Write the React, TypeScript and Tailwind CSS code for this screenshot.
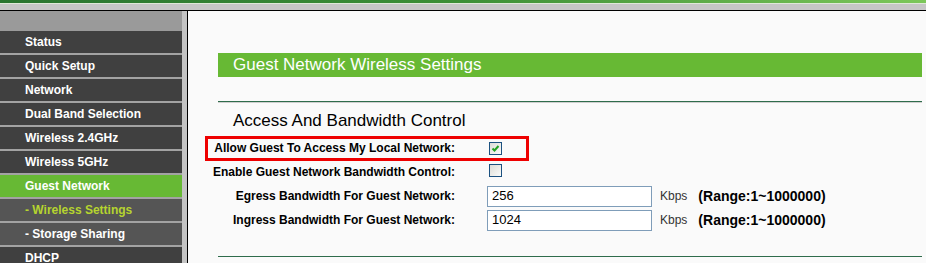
import React from "react";

const items: { label: string; kind: "main" | "active" | "sub" | "subactive" }[] = [
  { label: "Status", kind: "main" },
  { label: "Quick Setup", kind: "main" },
  { label: "Network", kind: "main" },
  { label: "Dual Band Selection", kind: "main" },
  { label: "Wireless 2.4GHz", kind: "main" },
  { label: "Wireless 5GHz", kind: "main" },
  { label: "Guest Network", kind: "active" },
  { label: "- Wireless Settings", kind: "subactive" },
  { label: "- Storage Sharing", kind: "sub" },
  { label: "DHCP", kind: "main" },
];

function Checkbox({ checked }: { checked: boolean }) {
  return (
    <span className="inline-flex h-[13px] w-[13px] items-center justify-center border border-[#1c5180] bg-gradient-to-br from-[#dcdcd7] to-[#fbfbf9]">
      {checked && (
        <svg width="9" height="9" viewBox="0 0 9 9">
          <path d="M1.5 4.5 L3.5 6.5 L7.5 2" stroke="#21a121" strokeWidth="2" fill="none" />
        </svg>
      )}
    </span>
  );
}

function Row({ label, children }: { label: string; children: React.ReactNode }) {
  return (
    <div className="flex h-[24px] items-center">
      <div className="w-[267px] text-right text-[12px] font-bold text-black">{label}</div>
      <div className="ml-[32px] flex items-center">{children}</div>
    </div>
  );
}

function BwInput({ value }: { value: string }) {
  return (
    <div className="flex items-center">
      <div className="flex h-[21px] w-[165px] items-center border border-[#7f9db9] bg-white pl-[4px] text-[13px] text-black">
        {value}
      </div>
      <span className="ml-[8px] text-[12px] text-[#333]">Kbps</span>
      <span className="ml-[11px] text-[14px] font-bold text-black">(Range:1~1000000)</span>
    </div>
  );
}

export default function App() {
  return (
    <div className="h-[263px] w-[926px] overflow-hidden bg-[#fafafa] font-['Liberation_Sans',Arial,sans-serif]">
      <div className="h-[3px] bg-gradient-to-r from-[#2a7530] via-[#3c8f36] to-[#7cc75a]" />
      <div className="h-px bg-[#dfe8d8]" />
      <div className="h-[6px] bg-[#c6c6c6]" />
      <div className="h-px bg-black" />
      <div className="flex">
        <div className="w-[182px] shrink-0">
          <div className="h-[20px] bg-[#9a9a9a]" />
          {items.map((it) => (
            <div key={it.label}>
              <div
                className={
                  "flex h-[22px] items-center pl-[25px] text-[12px] font-bold " +
                  (it.kind === "active"
                    ? "bg-[#67b934] text-white"
                    : it.kind === "subactive"
                    ? "bg-[#555555] text-[#b6d42f]"
                    : it.kind === "sub"
                    ? "bg-[#555555] text-white"
                    : "bg-[#404040] text-white")
                }
              >
                {it.label}
              </div>
              <div className="h-[2px] bg-[#a3a3a3]" />
            </div>
          ))}
        </div>
        <div className="w-[5px] shrink-0 bg-[#c4c4c4]" />
        <div className="w-px shrink-0 bg-black" />
        <div className="flex-1">
          <div className="pr-[4px] pl-[30px]">
            <div className="mt-[42px] flex h-[24px] items-center bg-[#67b934] pl-[15px] text-[17px] text-white">
              Guest Network Wireless Settings
            </div>
            <div className="mt-[24px] h-px bg-[#2f6c4c]" />
            <div className="h-px bg-[#cfcfcf]" />
          </div>
          <div className="relative pr-[4px]">
            <div className="h-[33px] pl-[45px] pt-[8px] text-[17px] leading-[20px] text-black">
              Access And Bandwidth Control
            </div>
            <div className="relative">
              <div className="pointer-events-none absolute left-[17px] top-0 h-[25px] w-[324px] border-[3px] border-[#ee0000]" />
              <Row label="Allow Guest To Access My Local Network:">
                <span className="ml-[2px]"><Checkbox checked /></span>
              </Row>
              <Row label="Enable Guest Network Bandwidth Control:">
                <span className="ml-[2px]"><Checkbox checked={false} /></span>
              </Row>
              <Row label="Egress Bandwidth For Guest Network:">
                <BwInput value="256" />
              </Row>
              <Row label="Ingress Bandwidth For Guest Network:">
                <BwInput value="1024" />
              </Row>
            </div>
            <div className="ml-[30px] mt-[24px] h-px bg-[#2f6c4c]" />
          </div>
        </div>
      </div>
    </div>
  );
}
